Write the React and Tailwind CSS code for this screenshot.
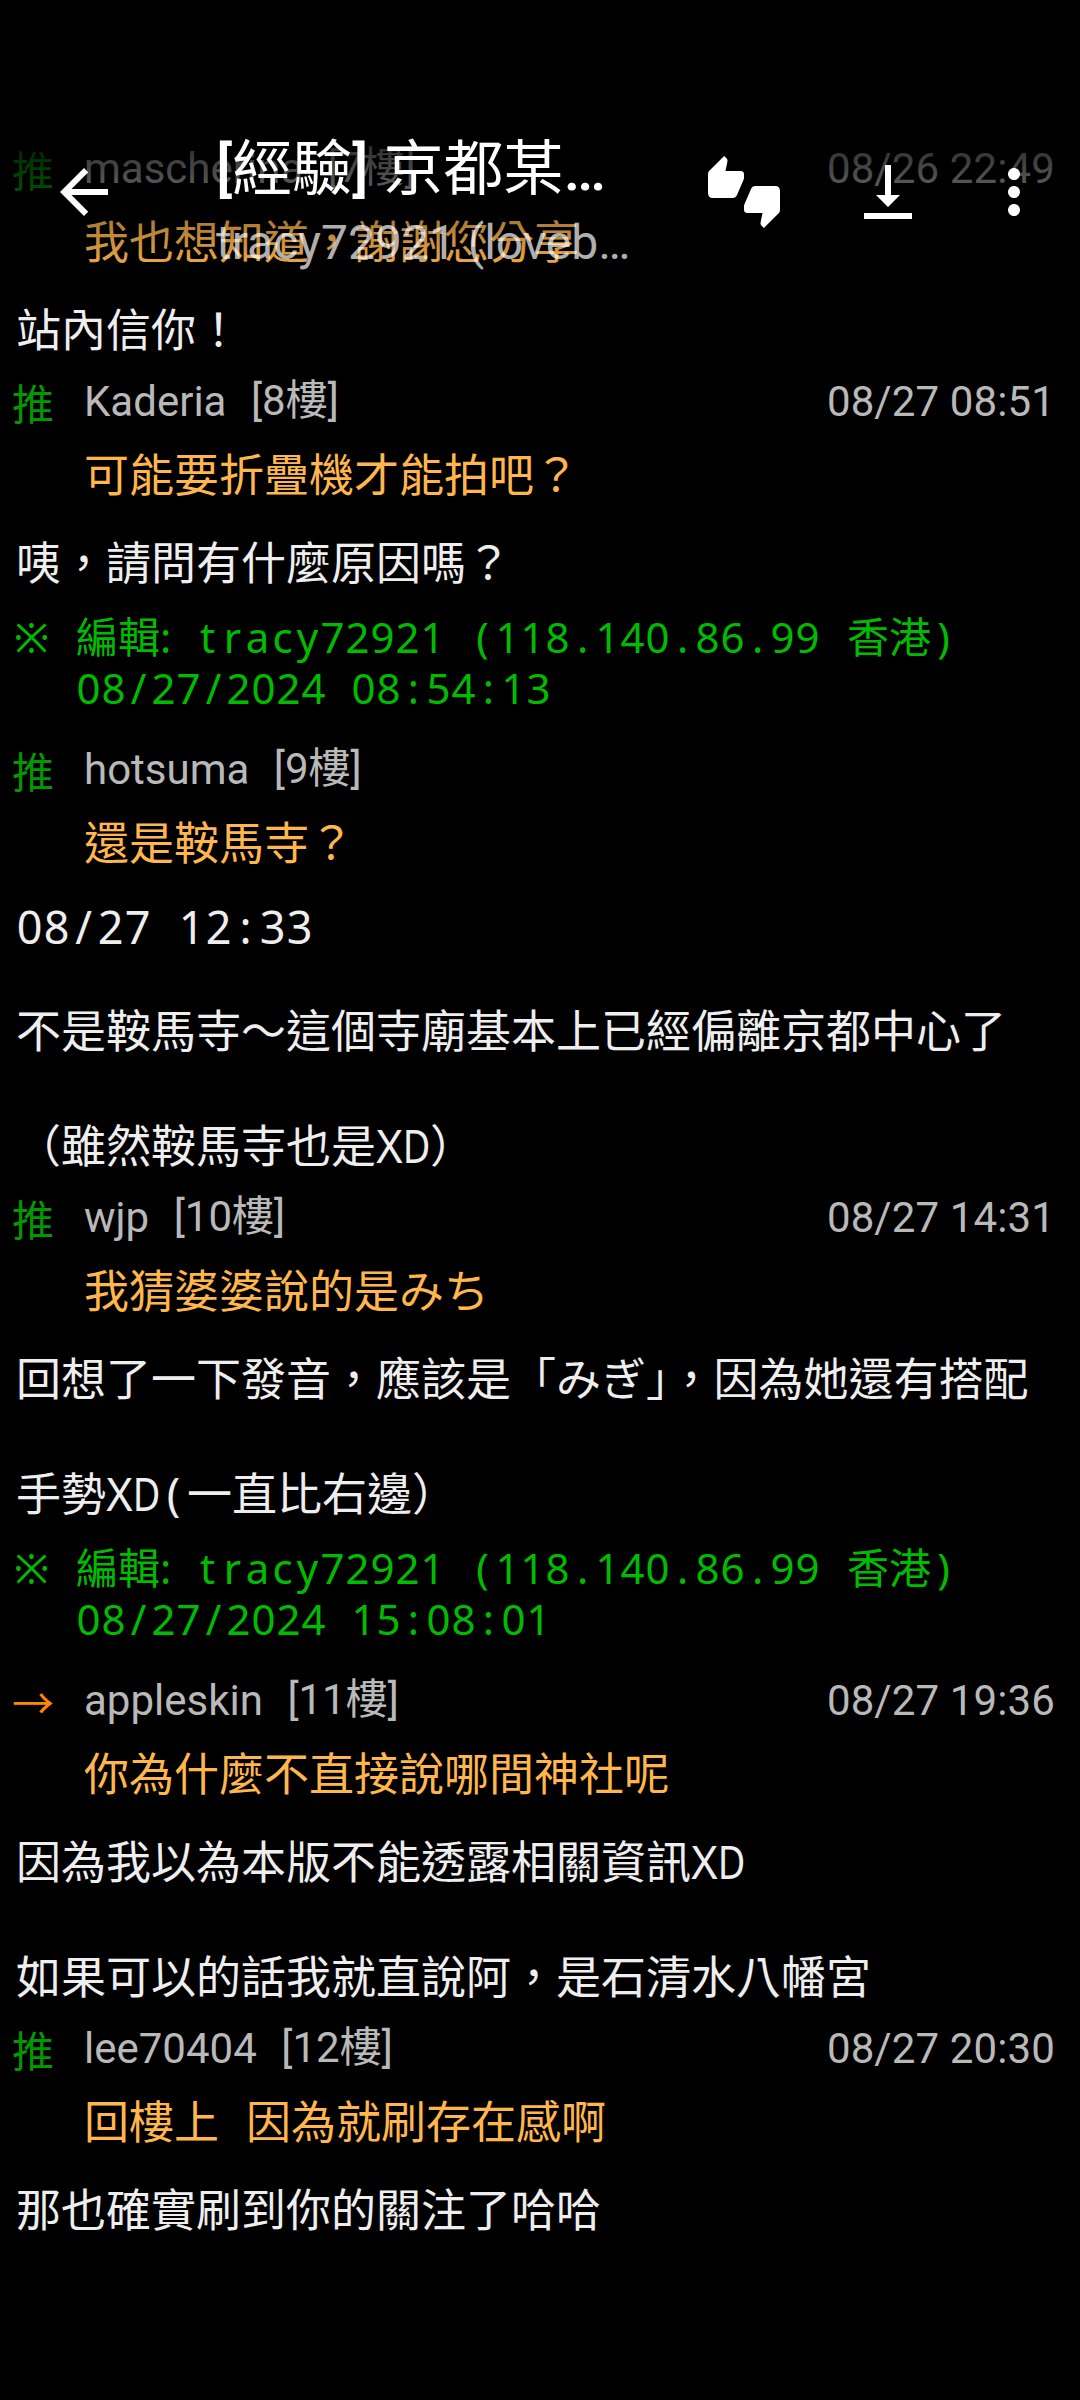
import React from "react";
import { MdArrowBack, MdThumbsUpDown, MdVerticalAlignBottom, MdMoreVert } from "react-icons/md";

// Latin text set on a fixed pitch, one cell per character.
function Mono({ children, cell }) {
  return (
    <span className="whitespace-pre font-['Noto_Sans'] leading-none">
      {children.split("").map((c, i) => (
        <span key={i} className={"inline-block whitespace-pre text-center leading-none " + cell}>
          {c === "D" ? <span className="-ml-1 -mr-1 inline-block scale-x-[0.84]">D</span> : c}
        </span>
      ))}
    </span>
  );
}

const Wide = ({ children }) => <Mono cell="w-[27px]">{children}</Mono>;
const Narrow = ({ children }) => <Mono cell="w-[25px]">{children}</Mono>;

function Comment({ tag = "推", user, floor, date, children }) {
  return (
    <section>
      <div className="flex h-[60px] pl-3 pr-[25px] text-[42px] leading-[60px] text-[#b9b9b9]">
        <span className={"w-[72px] shrink-0 font-['Noto_Sans_CJK_TC'] " + (tag === "推" ? "text-[#009900]" : "text-[#ff8800]")}>
          {tag}
        </span>
        <span>{user}</span>
        <span className="ml-[24.5px] leading-[58px]">[{floor}樓]</span>
        <span className="ml-auto tracking-[0.12px]">{date}</span>
      </div>
      <div className="h-[88px] whitespace-pre pl-[84px] font-['Noto_Sans_CJK_TC'] text-[45px] leading-[82px] text-[#ffb64d]">
        {children}
      </div>
    </section>
  );
}

function Reply({ lines }) {
  return (
    <div className="flex flex-col gap-[30px] pl-4 font-['Noto_Sans_CJK_TC'] text-[45px] leading-[82px] text-[#eeeeee]">
      {lines.map((l, i) => (
        <p key={i} className="h-[85px] whitespace-nowrap">{l}</p>
      ))}
    </div>
  );
}

function Edited({ time }) {
  return (
    <div className="flex h-[135px] pl-3.5 pt-1.5 font-['Noto_Sans','Noto_Sans_CJK_TC'] text-[42px] leading-[51px] text-[#00bb00]">
      <span className="w-[62px] shrink-0">※</span>
      <div className="whitespace-nowrap">
        <p className="h-[51px]">
          編輯<span className="inline-block w-[10px] leading-none">:</span>
          <Narrow>{" tracy72921 (118.140.86.99 "}</Narrow>
          <span className="ml-0.5">香港</span>
          <Narrow>)</Narrow>
        </p>
        <p className="h-[51px]">
          <Narrow>{time}</Narrow>
        </p>
      </div>
    </div>
  );
}

function TopBar() {
  return (
    <header className="absolute inset-x-0 top-0 h-[280px] bg-[linear-gradient(to_bottom,#000_100px,transparent_280px)] pt-[108px] text-white">
      <div className="flex h-[168px] items-center pl-12 pr-[30px]">
        <MdArrowBack className="size-[72px] shrink-0" />
        <div className="ml-24 w-[430px] whitespace-nowrap pt-6">
          <h1 className="h-[76px] text-[60px] leading-[76px]">
            <span className="font-medium">[</span>經驗<span className="font-medium">] </span>京都某<span className="font-medium">…</span>
          </h1>
          <p className="h-[68px] text-[48px] leading-[70px] text-white/70">tracy72921 (loveb…</p>
        </div>
        <MdThumbsUpDown className="ml-auto size-[72px] shrink-0" />
        <MdVerticalAlignBottom className="ml-[72px] size-[72px] shrink-0" />
        <MdMoreVert className="ml-[54px] size-[72px] shrink-0" />
      </div>
    </header>
  );
}

export default function App() {
  return (
    <div lang="zh-TW" className="relative h-[2400px] w-[1080px] overflow-hidden bg-black font-['Roboto','Noto_Sans_CJK_TC',sans-serif]">
      <main className="pt-[139px]">
        <Comment user="mascherina" floor="7" date="08/26 22:49">我也想知道，謝謝您分享</Comment>
        <Reply lines={["站內信你！"]} />
        <Comment user="Kaderia" floor="8" date="08/27 08:51">可能要折疊機才能拍吧？</Comment>
        <Reply lines={["咦，請問有什麼原因嗎？"]} />
        <Edited time="08/27/2024 08:54:13" />
        <Comment user="hotsuma" floor="9">還是鞍馬寺？</Comment>
        <p className="h-[100px] pl-4 font-['Noto_Sans'] text-[45px] leading-[78px] text-[#eeeeee]">
          <Wide>08/27 12:33</Wide>
        </p>
        <Reply
          lines={[
            "不是鞍馬寺～這個寺廟基本上已經偏離京都中心了",
            <>（雖然鞍馬寺也是<Wide>XD</Wide>）</>,
          ]}
        />
        <Comment user="wjp" floor="10" date="08/27 14:31">我猜婆婆說的是みち</Comment>
        <Reply
          lines={[
            "回想了一下發音，應該是「みぎ」，因為她還有搭配",
            <>手勢<Wide>XD(</Wide>一直比右邊）</>,
          ]}
        />
        <Edited time="08/27/2024 15:08:01" />
        <Comment tag="→" user="appleskin" floor="11" date="08/27 19:36">你為什麼不直接說哪間神社呢</Comment>
        <Reply
          lines={[
            <>因為我以為本版不能透露相關資訊<Wide>XD</Wide></>,
            "如果可以的話我就直說阿，是石清水八幡宮",
          ]}
        />
        <Comment user="lee70404" floor="12" date="08/27 20:30">
          回樓上<Wide>{" "}</Wide>因為就刷存在感啊
        </Comment>
        <Reply lines={["那也確實刷到你的關注了哈哈"]} />
      </main>
      <TopBar />
    </div>
  );
}
